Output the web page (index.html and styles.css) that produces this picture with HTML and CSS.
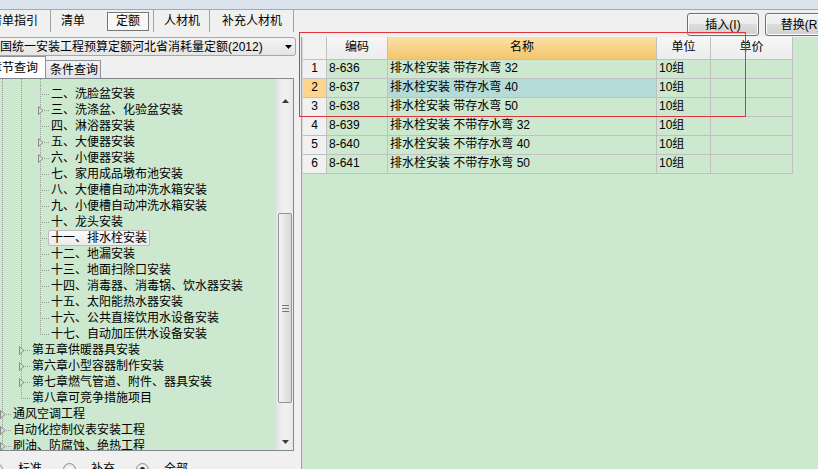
FILE: index.html
```html
<!DOCTYPE html>
<html lang="zh-CN">
<head>
<meta charset="utf-8">
<title>定额</title>
<link rel="stylesheet" href="styles.css">
</head>
<body>
<div class="topband"></div>
<div class="main">
  <div class="left">
    <div class="tabs">
      <div class="tab t1">清单指引</div>
      <div class="tab t2">清单</div>
      <div class="tab t3">定额</div>
      <div class="tab t4">人材机</div>
      <div class="tab t5">补充人材机</div>
    </div>
    <div class="combo">
      <span class="combo-text">国统一安装工程预算定额河北省消耗量定额(2012)</span>
      <svg class="combo-arrow" viewBox="0 0 7 4" width="7" height="4"><path d="M0 0h7L3.5 4z"/></svg>
    </div>
    <div class="qtabs">
      <div class="qtab on">章节查询</div>
      <div class="qtab off">条件查询</div>
    </div>
    <div class="panel">
      <div class="tree">
        <div class="n stub"><i class="g"></i><i class="g"></i><i class="g"></i></div>
        <div class="n"><i class="g"></i><i class="g"></i><i class="c"></i><span class="t">二、洗脸盆安装</span></div>
        <div class="n"><i class="g"></i><i class="g"></i><i class="c"><svg viewBox="0 0 6 9" width="6" height="9"><path d="M.5.5 5 4.5.5 8.5z"/></svg></i><span class="t">三、洗涤盆、化验盆安装</span></div>
        <div class="n"><i class="g"></i><i class="g"></i><i class="c"></i><span class="t">四、淋浴器安装</span></div>
        <div class="n"><i class="g"></i><i class="g"></i><i class="c"><svg viewBox="0 0 6 9" width="6" height="9"><path d="M.5.5 5 4.5.5 8.5z"/></svg></i><span class="t">五、大便器安装</span></div>
        <div class="n"><i class="g"></i><i class="g"></i><i class="c"><svg viewBox="0 0 6 9" width="6" height="9"><path d="M.5.5 5 4.5.5 8.5z"/></svg></i><span class="t">六、小便器安装</span></div>
        <div class="n"><i class="g"></i><i class="g"></i><i class="c"></i><span class="t">七、家用成品墩布池安装</span></div>
        <div class="n"><i class="g"></i><i class="g"></i><i class="c"></i><span class="t">八、大便槽自动冲洗水箱安装</span></div>
        <div class="n"><i class="g"></i><i class="g"></i><i class="c"></i><span class="t">九、小便槽自动冲洗水箱安装</span></div>
        <div class="n"><i class="g"></i><i class="g"></i><i class="c"></i><span class="t">十、龙头安装</span></div>
        <div class="n"><i class="g"></i><i class="g"></i><i class="c"></i><span class="t sel">十一、排水栓安装</span></div>
        <div class="n"><i class="g"></i><i class="g"></i><i class="c"></i><span class="t">十二、地漏安装</span></div>
        <div class="n"><i class="g"></i><i class="g"></i><i class="c"></i><span class="t">十三、地面扫除口安装</span></div>
        <div class="n"><i class="g"></i><i class="g"></i><i class="c"></i><span class="t">十四、消毒器、消毒锅、饮水器安装</span></div>
        <div class="n"><i class="g"></i><i class="g"></i><i class="c"></i><span class="t">十五、太阳能热水器安装</span></div>
        <div class="n"><i class="g"></i><i class="g"></i><i class="c"></i><span class="t">十六、公共直接饮用水设备安装</span></div>
        <div class="n"><i class="g"></i><i class="g"></i><i class="c last"></i><span class="t">十七、自动加压供水设备安装</span></div>
        <div class="n"><i class="g"></i><i class="c"><svg viewBox="0 0 6 9" width="6" height="9"><path d="M.5.5 5 4.5.5 8.5z"/></svg></i><span class="t">第五章供暖器具安装</span></div>
        <div class="n"><i class="g"></i><i class="c"><svg viewBox="0 0 6 9" width="6" height="9"><path d="M.5.5 5 4.5.5 8.5z"/></svg></i><span class="t">第六章小型容器制作安装</span></div>
        <div class="n"><i class="g"></i><i class="c"><svg viewBox="0 0 6 9" width="6" height="9"><path d="M.5.5 5 4.5.5 8.5z"/></svg></i><span class="t">第七章燃气管道、附件、器具安装</span></div>
        <div class="n"><i class="g"></i><i class="c last"></i><span class="t">第八章可竞争措施项目</span></div>
        <div class="n"><i class="c"><svg viewBox="0 0 6 9" width="6" height="9"><path d="M.5.5 5 4.5.5 8.5z"/></svg></i><span class="t">通风空调工程</span></div>
        <div class="n"><i class="c"><svg viewBox="0 0 6 9" width="6" height="9"><path d="M.5.5 5 4.5.5 8.5z"/></svg></i><span class="t">自动化控制仪表安装工程</span></div>
        <div class="n"><i class="c"><svg viewBox="0 0 6 9" width="6" height="9"><path d="M.5.5 5 4.5.5 8.5z"/></svg></i><span class="t">刷油、防腐蚀、绝热工程</span></div>
      </div>
      <div class="vscroll">
        <div class="sbtn up"><svg viewBox="0 0 7 4" width="7" height="4"><path d="M3.5 0 7 4H0z"/></svg></div>
        <div class="thumb"><span class="grip"></span></div>
        <div class="sbtn down"><svg viewBox="0 0 7 4" width="7" height="4"><path d="M0 0h7L3.5 4z"/></svg></div>
      </div>
    </div>
    <div class="radios">
      <label class="radio"><span class="rc"></span>标准</label>
      <label class="radio"><span class="rc"></span>补充</label>
      <label class="radio"><span class="rc on"></span>全部</label>
    </div>
  </div>
  <div class="right">
    <div class="btnrow">
      <div class="btn">插入(I)</div>
      <div class="btn">替换(R)</div>
    </div>
    <div class="gridbox">
      <div class="grow ghead">
        <div class="rn"></div><div class="hc">编码</div><div class="hc hot">名称</div><div class="hc">单位</div><div class="hc">单价</div>
      </div>
      <div class="grow"><div class="rn">1</div><div>8-636</div><div class="nm">排水栓安装 带存水弯 32</div><div>10组</div><div></div></div>
      <div class="grow cur"><div class="rn">2</div><div>8-637</div><div class="nm">排水栓安装 带存水弯 40</div><div>10组</div><div></div></div>
      <div class="grow"><div class="rn">3</div><div>8-638</div><div class="nm">排水栓安装 带存水弯 50</div><div>10组</div><div></div></div>
      <div class="grow"><div class="rn">4</div><div>8-639</div><div class="nm">排水栓安装 不带存水弯 32</div><div>10组</div><div></div></div>
      <div class="grow"><div class="rn">5</div><div>8-640</div><div class="nm">排水栓安装 不带存水弯 40</div><div>10组</div><div></div></div>
      <div class="grow"><div class="rn">6</div><div>8-641</div><div class="nm">排水栓安装 不带存水弯 50</div><div>10组</div><div></div></div>
    </div>
  </div>
</div>
<div class="redbox"></div>
</body>
</html>
```
FILE: styles.css
```css
* { box-sizing: border-box; margin: 0; padding: 0; }
html, body { width: 818px; height: 469px; overflow: hidden; }
body {
  position: relative;
  background: #f0f0f0;
  font-family: "Liberation Sans", "Noto Sans CJK SC", sans-serif;
  font-size: 12px;
  color: #000;
}
.topband { height: 10px; background: #dae2eb; border-bottom: 1px solid #a2aab4; }
.main { display: flex; gap: 4px; height: 459px; }

/* left column */
.left { width: 296px; flex-shrink: 0; display: flex; flex-direction: column; }
.left > * { flex-shrink: 0; }
.tabs { display: flex; height: 22px; }
.tab { display: flex; align-items: center; white-space: nowrap; line-height: 16px; }
.t1 { margin-left: -10px; padding-right: 12px; border-right: 1px solid #a0a0a0; }
.t2 { padding: 0 22px 0 10px; }
.t3 { align-self: center; height: 19px; padding: 0 8px; border: 1px solid #767676; background: #f7f7f7; box-shadow: inset 1px 1px 0 #fff; }
.t4 { margin-left: 4px; padding: 0 9px 0 10px; border-left: 1px solid #a0a0a0; border-right: 1px solid #a0a0a0; }
.t5 { padding: 0 11px 0 12px; border-right: 1px solid #a0a0a0; }

.combo {
  margin: 5px 0 0 -4px; width: 300px; height: 19px;
  display: flex; align-items: center; padding: 0 3px;
  border: 1px solid #a7a7a7; border-radius: 3px;
  background: linear-gradient(#f4f4f4, #e4e4e4);
  white-space: nowrap; line-height: 16px;
}
.combo-arrow { margin-left: auto; fill: #000; }

.qtabs { display: flex; align-items: flex-end; height: 22px; }
.qtab { display: flex; align-items: center; white-space: nowrap; line-height: 16px; border: 1px solid #8e9199; border-bottom: none; }
.qtab.on { margin-left: -14px; height: 22px; padding: 0 7px 0 3px; background: #fff; }
.qtab.off { height: 18px; padding: 0 2px 0 4px; border-left: none; background: linear-gradient(#f3f3f3, #e3e3e3); }

.panel {
  margin-left: -1px; width: 295px; height: 373px;
  display: flex; overflow: hidden;
  border: 1px solid #828790; background: #cce8cf;
}
.tree { flex: 1; overflow: hidden; padding-left: 2px; }
.n { display: flex; height: 16px; align-items: stretch; white-space: nowrap; }
.n.stub { height: 7px; }
.n i { display: block; flex-shrink: 0; }
.g {
  width: 19px;
  background: repeating-linear-gradient(#9a9a9a 0 1px, transparent 1px 2px) 0 0 / 1px 100% no-repeat;
}
.c {
  width: 11px; display: flex !important; align-items: center;
  background:
    repeating-linear-gradient(#9a9a9a 0 1px, transparent 1px 2px) 0 0 / 1px 100% no-repeat,
    repeating-linear-gradient(90deg, #9a9a9a 0 1px, transparent 1px 2px) 2px 8px / 8px 1px no-repeat;
}
.c.last {
  background:
    repeating-linear-gradient(#9a9a9a 0 1px, transparent 1px 2px) 0 0 / 1px 9px no-repeat,
    repeating-linear-gradient(90deg, #9a9a9a 0 1px, transparent 1px 2px) 2px 8px / 8px 1px no-repeat;
}
.c svg { margin-left: -2px; fill: #cce8cf; stroke: #8a8a8a; stroke-width: 1; }
.t { line-height: 16px; }
.t.sel {
  margin-left: -3px; padding: 0 2px 0 2px; line-height: 14px;
  border: 1px solid #bcbcbc; border-radius: 2px;
  background: linear-gradient(#fafafa, #ececec);
}

.vscroll {
  width: 17px; flex-shrink: 0; display: flex; flex-direction: column;
  background: linear-gradient(90deg, #e6e6e6, #f2f2f2 50%, #e9e9e9);
  border-left: 1px solid #e2e2e2;
}
.vscroll > * { flex-shrink: 0; }
.sbtn { height: 17px; display: flex; align-items: center; justify-content: center; fill: #3c3c3c; }
.sbtn.up { height: 30px; padding-top: 13px; }
.sbtn.down { margin-top: auto; }
.thumb {
  margin: 104px 1px 0 1px; height: 190px;
  border: 1px solid #959595; border-radius: 2px;
  background: linear-gradient(90deg, #f4f4f4, #e6e6e6 50%, #d8d8d8);
  display: flex; align-items: center; justify-content: center;
}
.grip { width: 7px; height: 7px; border-top: 1px solid #7a7a7a; border-bottom: 1px solid #7a7a7a; background: linear-gradient(#7a7a7a, #7a7a7a) 0 2px / 7px 1px no-repeat; }

.radios { display: flex; align-items: center; height: 16px; margin-top: 10px; margin-left: -10px; white-space: nowrap; }
.radio { display: flex; align-items: center; margin-right: 21px; line-height: 16px; }
.rc { width: 13px; height: 13px; border-radius: 50%; border: 1px solid #8f8f8f; background: radial-gradient(#ffffff, #d9d9d9); margin-right: 15px; position: relative; }
.rc.on::after { content: ""; position: absolute; left: 3px; top: 3px; width: 5px; height: 5px; border-radius: 50%; background: #1a1a1a; }

/* right column */
.right { flex: 1; display: flex; flex-direction: column; overflow: hidden; }
.right > * { flex-shrink: 0; }
.btnrow { display: flex; gap: 6px; height: 27px; padding: 3px 0 0 387px; }
.btn {
  flex-shrink: 0; width: 72px; height: 23px;
  display: flex; align-items: center; justify-content: center;
  border: 1px solid #707070; border-radius: 3px;
  background: linear-gradient(#f2f2f2 0%, #ebebeb 50%, #dddddd 50%, #cfcfcf 100%);
  box-shadow: inset 0 0 0 1px #fbfbfb;
  white-space: nowrap; line-height: 16px;
}
.gridbox {
  flex: 1 0 auto; margin-left: 1px; padding-left: 1px;
  border-left: 1px solid #a0a0a0; box-shadow: inset 1px 0 0 #dadada;
  background: #cce8cf;
}
.grow { display: grid; grid-template-columns: 24px 61px 269px 54px 82px; width: 490px; height: 19px; }
.grow > div {
  border-right: 1px solid #c0c0c0; border-bottom: 1px solid #c0c0c0;
  padding-left: 2px; line-height: 17px; white-space: nowrap; overflow: hidden;
}
.grow > .rn { background: #f1f1f1; text-align: center; padding-left: 0; }
.grow.cur > .rn { background: #ffd48e; }
.grow.cur > .nm { background: #b5dbd8; }
.grow > .nm { padding-left: 2px; }
.ghead { height: 23px; }
.ghead > div { background: linear-gradient(#f6f6f6, #ececec); text-align: center; line-height: 21px; padding-left: 0; }
.ghead > .hot { background: linear-gradient(#fbe1a6, #f3c56c); }

.redbox {
  position: absolute; left: 299px; top: 32px; width: 447px; height: 85px;
  border: 1px solid #e2343a; z-index: 5; pointer-events: none;
}
```
